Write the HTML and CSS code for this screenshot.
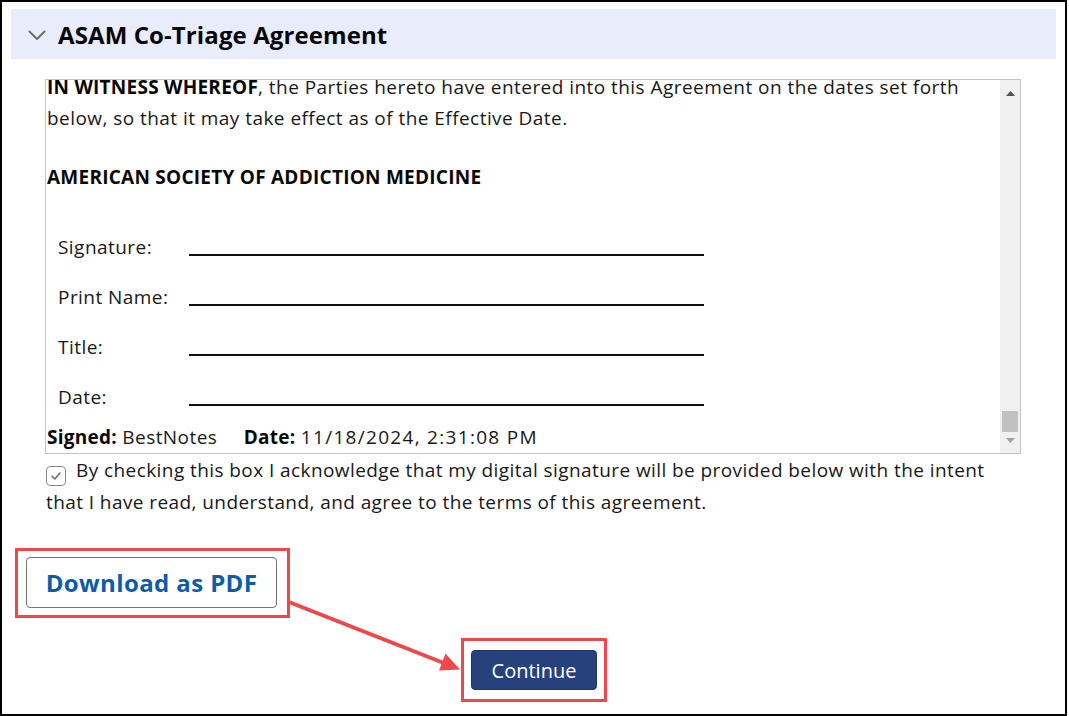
FILE: index.html
```html
<!DOCTYPE html>
<html lang="en">
<head>
<meta charset="utf-8">
<title>ASAM Co-Triage Agreement</title>
<link rel="stylesheet" href="styles.css">
</head>
<body>
<div class="frame">
  <div class="section-header">
    <svg class="chevron" width="18" height="11" viewBox="0 0 18 11"><path d="M1.5 1.5 L9 9 L16.5 1.5" fill="none" stroke="#706e6b" stroke-width="2" stroke-linecap="round" stroke-linejoin="round"/></svg>
    <h1 class="section-title">ASAM Co-Triage Agreement</h1>
  </div>

  <div class="content">
    <div class="doc-box">
      <div class="doc">
        <div class="doc-inner">
          <p class="doc-p"><b>IN WITNESS WHEREOF</b>, the Parties hereto have entered into this Agreement on the dates set forth below, so that it may take effect as of the Effective Date.</p>
          <p class="doc-org"><b>AMERICAN SOCIETY OF ADDICTION MEDICINE</b></p>
          <div class="sig-table">
            <div class="sig-row"><span class="sig-label">Signature:</span><span class="sig-line"></span></div>
            <div class="sig-row"><span class="sig-label">Print Name:</span><span class="sig-line"></span></div>
            <div class="sig-row"><span class="sig-label">Title:</span><span class="sig-line"></span></div>
            <div class="sig-row"><span class="sig-label">Date:</span><span class="sig-line"></span></div>
          </div>
          <p class="signed"><b>Signed:</b> BestNotes <span class="signed-gap"></span><b>Date:</b> <span class="digits">11/18/2024, 2:31:08 PM</span></p>
        </div>
      </div>
      <div class="scrollbar">
        <div class="sb-btn sb-up"><svg width="9" height="5" viewBox="0 0 9 5"><path d="M0 5 L4.5 0 L9 5 Z" fill="#505050"/></svg></div>
        <div class="sb-track"><div class="sb-thumb"></div></div>
        <div class="sb-btn sb-down"><svg width="9" height="5" viewBox="0 0 9 5"><path d="M0 0 L4.5 5 L9 0 Z" fill="#a3a3a3"/></svg></div>
      </div>
    </div>
    <p class="ack"><span class="checkbox"><svg width="12" height="10" viewBox="0 0 12 10"><path d="M2 5.2 L4.8 8 L10 2" fill="none" stroke="#706e6b" stroke-width="1.6" stroke-linecap="round" stroke-linejoin="round"/></svg></span>By checking this box I acknowledge that my digital signature will be provided below with the intent that I have read, understand, and agree to the terms of this agreement.</p>
  </div>

  <div class="actions-top">
    <span class="callout callout-pdf"><button class="btn-pdf" type="button">Download as PDF</button></span>
  </div>
  <div class="actions-bottom">
    <span class="callout callout-continue"><button class="btn-continue" type="button">Continue</button></span>
  </div>

  <svg class="annot-arrow" width="1067" height="716" viewBox="2 2 1067 716">
    <line x1="291" y1="604" x2="447" y2="665.5" stroke="#f0474b" stroke-width="4"/>
    <polygon points="462,671.5 441,672.5 447.5,655.5" fill="#f0474b"/>
  </svg>
</div>
</body>
</html>
```

FILE: styles.css
```css
* { box-sizing: border-box; }

html, body {
  margin: 0;
  padding: 0;
  background: #ffffff;
}

body {
  font-family: "Open Sans", "Noto Sans", sans-serif;
  color: #181818;
}

.frame {
  position: relative;
  width: 1067px;
  height: 716px;
  border: 2px solid #000;
  padding: 7px 9px 0 9px;
  overflow: hidden;
}

.section-header {
  height: 50px;
  background: #e9edfb;
  display: flex;
  align-items: center;
  padding-left: 17px;
  gap: 12px;
}

.chevron { display: block; margin-top: 2px; }

.section-title {
  margin: 0;
  font-size: 24px;
  font-weight: 700;
  color: #080707;
  letter-spacing: 0.1px;
}

.content {
  padding: 20px 35px 0 34px;
}

.doc-box {
  height: 375px;
  border: 1px solid #c4c4c4;
  display: flex;
}

.doc {
  flex: 1;
  overflow: hidden;
  padding-left: 1px;
}

.doc-inner {
  margin-top: -8px;
  font-size: 19px;
  line-height: 31px;
  color: #181818;
  letter-spacing: 0.45px;
}

.doc-p { margin: 0; }

.doc-org { margin: 28px 0 0 0; }

.doc-inner b { font-weight: 700; color: #080707; letter-spacing: 0.25px; }

.sig-table {
  margin-top: 29px;
  padding-left: 11px;
}

.sig-row {
  height: 50px;
  display: flex;
  align-items: center;
}

.sig-label {
  width: 131px;
  line-height: 24px;
}

.sig-line {
  width: 515px;
  height: 19px;
  border-bottom: 2px solid #111;
  transform: translateY(-1px);
}

.signed { margin: 0; }

.signed-gap {
  display: inline-block;
  width: 21px;
}

.digits { letter-spacing: 1.3px; }

.scrollbar {
  width: 20px;
  background: #f0f0f0;
  display: flex;
  flex-direction: column;
}

.sb-btn {
  height: 21px;
  display: flex;
  align-items: center;
  justify-content: center;
}

.sb-btn svg { display: block; }

.sb-up { height: 22px; padding-top: 4px; }
.sb-down { padding-bottom: 4px; }

.sb-track {
  flex: 1;
  display: flex;
  flex-direction: column;
  justify-content: flex-end;
}

.sb-thumb {
  height: 21px;
  margin: 0 2px;
  background: #c1c1c1;
}

.ack {
  margin: 0;
  padding-left: 1px;
  font-size: 19px;
  line-height: 32px;
  color: #181818;
  letter-spacing: 0.42px;
}

.checkbox {
  display: inline-flex;
  align-items: center;
  justify-content: center;
  width: 20px;
  height: 20px;
  border: 1px solid #8a8a8a;
  border-radius: 4px;
  vertical-align: -4px;
  margin-right: 10px;
}

.checkbox svg { display: block; }

.actions-top {
  padding: 30px 0 0 4px;
  display: flex;
}

.callout {
  display: inline-flex;
  border: 3px solid #f0474b;
}

.callout-pdf {
  padding: 6px 10px 7px 8px;
}

.btn-pdf {
  width: 251px;
  height: 51px;
  border: 1px solid #747474;
  border-radius: 4px;
  background: #fff;
  color: #0b5cab;
  font-family: "Open Sans", "Noto Sans", sans-serif;
  font-weight: 700;
  font-size: 24px;
  letter-spacing: 0.4px;
  padding: 0;
  cursor: pointer;
}

.actions-bottom {
  padding-top: 20px;
  display: flex;
  justify-content: center;
  margin-left: -9px;
  margin-right: -9px;
}

.callout-continue {
  padding: 6px 7px 9px 7px;
  margin-left: 1px;
}

.btn-continue {
  width: 126px;
  height: 40px;
  margin-top: 3px;
  border: 1px solid #1f3566;
  border-radius: 4px;
  background: #27417c;
  color: #fff;
  font-family: "Open Sans", "Noto Sans", sans-serif;
  font-size: 20px;
  padding: 0;
  cursor: pointer;
}

.annot-arrow {
  position: absolute;
  left: -2px;
  top: -2px;
  pointer-events: none;
}
```
